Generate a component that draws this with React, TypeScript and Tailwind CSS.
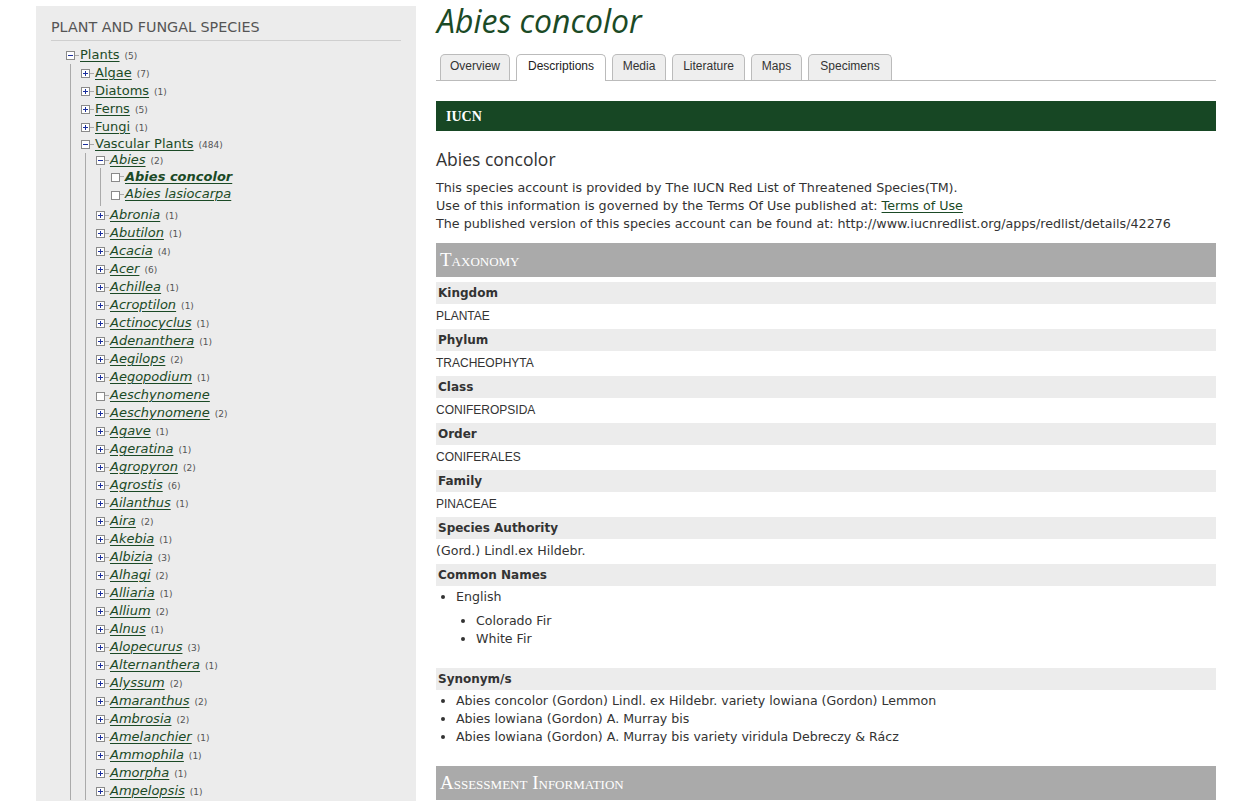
import React from 'react';

type TreeNode = {
  name: string;
  count?: number;
  italic?: boolean;
  bold?: boolean;
  open?: boolean;
  leaf?: boolean;
  h?: string;
  children?: TreeNode[];
};

const genera: [string, number | null][] = [
  ['Abronia', 1], ['Abutilon', 1], ['Acacia', 4], ['Acer', 6], ['Achillea', 1],
  ['Acroptilon', 1], ['Actinocyclus', 1], ['Adenanthera', 1], ['Aegilops', 2],
  ['Aegopodium', 1], ['Aeschynomene', null], ['Aeschynomene', 2], ['Agave', 1],
  ['Ageratina', 1], ['Agropyron', 2], ['Agrostis', 6], ['Ailanthus', 1], ['Aira', 2],
  ['Akebia', 1], ['Albizia', 3], ['Alhagi', 2], ['Alliaria', 1], ['Allium', 2],
  ['Alnus', 1], ['Alopecurus', 3], ['Alternanthera', 1], ['Alyssum', 2],
  ['Amaranthus', 2], ['Ambrosia', 2], ['Amelanchier', 1], ['Ammophila', 1],
  ['Amorpha', 1], ['Ampelopsis', 1],
];

const tree: TreeNode = {
  name: 'Plants',
  count: 5,
  open: true,
  h: 'h-[17px]',
  children: [
    { name: 'Algae', count: 7 },
    { name: 'Diatoms', count: 1 },
    { name: 'Ferns', count: 5 },
    { name: 'Fungi', count: 1 },
    {
      name: 'Vascular Plants',
      count: 484,
      open: true,
      h: 'h-[17px]',
      children: [
        {
          name: 'Abies',
          count: 2,
          italic: true,
          open: true,
          h: 'h-[15px]',
          children: [
            { name: 'Abies concolor', italic: true, bold: true, leaf: true, h: 'h-[17px]' },
            { name: 'Abies lasiocarpa', italic: true, leaf: true, h: 'h-[21px] pb-[3px]' },
          ],
        },
        ...genera.map(([name, count]) => ({
          name,
          count: count ?? undefined,
          italic: true,
          leaf: count === null,
        })),
      ],
    },
  ],
};

function Toggle({ open, leaf }: { open?: boolean; leaf?: boolean }) {
  if (leaf) {
    return (
      <svg width="9" height="9" viewBox="0 0 9 9" className="mt-[2px] shrink-0">
        <rect x="0.5" y="0.5" width="8" height="8" fill="#fff" stroke="#8a8a8a" />
      </svg>
    );
  }
  return (
    <svg width="9" height="9" viewBox="0 0 9 9" className="shrink-0">
      <rect x="0.5" y="0.5" width="8" height="8" fill="#fff" stroke="#8a8a8a" />
      <line x1="2" y1="4.5" x2="7" y2="4.5" stroke="#1b2f9e" strokeWidth="1" />
      {!open && <line x1="4.5" y1="2" x2="4.5" y2="7" stroke="#1b2f9e" strokeWidth="1" />}
    </svg>
  );
}

function Branch({ node }: { node: TreeNode }) {
  return (
    <div>
      <div className={`flex items-center ${node.h ?? 'h-[18px]'}`}>
        <Toggle open={node.open} leaf={node.leaf} />
        <span className="h-px w-[4px] shrink-0 bg-[#aaa]" />
        <span className="ml-px flex items-baseline whitespace-nowrap">
          <a
            href="#"
            className={`text-[13px] leading-[16px] text-[#1b4a26] underline decoration-1 underline-offset-[2px] ${
              node.italic ? 'italic' : ''
            } ${node.bold ? 'font-bold no-underline' : ''}`}
          >
            {node.name}
          </a>
          {node.count !== undefined && (
            <span className="ml-[5px] text-[9px] text-[#555]">({node.count})</span>
          )}
        </span>
      </div>
      {node.children && (
        <div className="ml-[4px] border-l border-[#aaa] pl-[10px]">
          {node.children.map((c, i) => (
            <Branch key={c.name + i} node={c} />
          ))}
        </div>
      )}
    </div>
  );
}

function Sidebar() {
  return (
    <aside className="mt-[6px] ml-[36px] h-[795px] w-[380px] shrink-0 overflow-hidden bg-[#ececec] px-[15px] font-['DejaVu_Sans',Verdana,sans-serif]">
      <h2 className="border-b border-[#cfcfcf] pt-[13px] pb-[5px] text-[14.3px] leading-[16px] font-normal text-[#555]">
        PLANT AND FUNGAL SPECIES
      </h2>
      <div className="mt-[6px] pl-[15px]">
        <Branch node={tree} />
      </div>
    </aside>
  );
}

const tabs = [
  { label: 'Overview', w: 'w-[70px]' },
  { label: 'Descriptions', w: 'w-[90px]', active: true },
  { label: 'Media', w: 'w-[54px]' },
  { label: 'Literature', w: 'w-[73px]' },
  { label: 'Maps', w: 'w-[51px]' },
  { label: 'Specimens', w: 'w-[84px]' },
];

const taxonomy: [string, string, string?][] = [
  ['Kingdom', 'PLANTAE'],
  ['Phylum', 'TRACHEOPHYTA'],
  ['Class', 'CONIFEROPSIDA'],
  ['Order', 'CONIFERALES'],
  ['Family', 'PINACEAE'],
  ['Species Authority', '(Gord.) Lindl.ex Hildebr.', 'verdana'],
];

function FieldLabel({ children }: { children: React.ReactNode }) {
  return (
    <div className="flex h-[22px] items-center bg-[#ececec] pl-[2px] text-[12px] font-bold text-[#333]">
      {children}
    </div>
  );
}

function SectionBar({ children }: { children: React.ReactNode }) {
  return (
    <div className="flex h-[34px] items-center bg-[#aaaaaa] pl-[4px] font-['Liberation_Serif',serif] text-[19px] text-white [font-variant:small-caps]">
      {children}
    </div>
  );
}

function Content() {
  return (
    <main className="ml-[20px] w-[780px] shrink-0 font-['DejaVu_Sans',Verdana,sans-serif] text-[#333]">
      <h1 className="h-[54px] pt-[1px] pl-px font-['Open_Sans',sans-serif] text-[32px] leading-[40px] font-normal text-[#1b4a26] italic">
        Abies concolor
      </h1>

      <div className="flex h-[27px] items-end gap-[6px] border-b border-[#bbb] pl-[4px] font-['Liberation_Sans',Arial,sans-serif] text-[12px]">
        {tabs.map((t) => (
          <div
            key={t.label}
            className={`flex items-center justify-center rounded-t-[5px] border border-b-0 border-[#bbb] ${t.w} ${
              t.active ? '-mb-px h-[27px] bg-white pb-[4px] text-[#222]' : 'h-[26px] bg-[#eee] pb-[3px] text-[#333]'
            }`}
          >
            {t.label}
          </div>
        ))}
      </div>

      <div className="mt-[20px] flex h-[30px] items-center bg-[#174724] pl-[10px] font-['Liberation_Serif',serif] text-[14px] font-bold text-white">
        IUCN
      </div>

      <h3 className="mt-[16px] font-['Open_Sans',sans-serif] text-[17.5px] leading-[24px] font-normal text-[#333]">
        Abies concolor
      </h3>

      <div className="mt-[8px] text-[12.7px] leading-[18px]">
        <div>This species account is provided by The IUCN Red List of Threatened Species(TM).</div>
        <div>
          Use of this information is governed by the Terms Of Use published at:{' '}
          <a href="#" className="text-[#1b4a26] underline underline-offset-[2px]">
            Terms of Use
          </a>
        </div>
        <div>
          The published version of this species account can be found at:
          http://www.iucnredlist.org/apps/redlist/details/42276
        </div>
      </div>

      <div className="mt-[10px]">
        <SectionBar>Taxonomy</SectionBar>
      </div>

      <div className="mt-[5px]">
        {taxonomy.map(([label, value, font]) => (
          <div key={label}>
            <FieldLabel>{label}</FieldLabel>
            <div
              className={`flex h-[25px] items-center pb-[1px] ${
                font ? 'text-[12.6px]' : "font-['Liberation_Sans',Arial,sans-serif] text-[12px]"
              }`}
            >
              {value}
            </div>
          </div>
        ))}
        <FieldLabel>Common Names</FieldLabel>
        <ul className="mt-[2px] list-disc pl-[20px] text-[12.6px] leading-[18px]">
          <li>
            English
            <ul className="mt-[6px] list-disc pl-[20px]">
              <li>Colorado Fir</li>
              <li>White Fir</li>
            </ul>
          </li>
        </ul>
        <div className="mt-[20px]">
          <FieldLabel>Synonym/s</FieldLabel>
        </div>
        <ul className="mt-[2px] list-disc pl-[20px] text-[12.6px] leading-[18px]">
          <li>Abies concolor (Gordon) Lindl. ex Hildebr. variety lowiana (Gordon) Lemmon</li>
          <li>Abies lowiana (Gordon) A. Murray bis</li>
          <li>Abies lowiana (Gordon) A. Murray bis variety viridula Debreczy &amp; Rácz</li>
        </ul>
        <div className="mt-[20px]">
          <SectionBar>Assessment Information</SectionBar>
        </div>
      </div>
    </main>
  );
}

export default function App() {
  return (
    <div className="flex h-[801px] w-[1252px] overflow-hidden bg-white">
      <Sidebar />
      <Content />
    </div>
  );
}
